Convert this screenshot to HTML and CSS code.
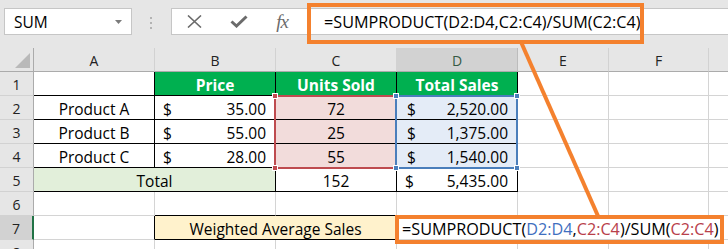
FILE: index.html
```html
<!DOCTYPE html>
<html lang="en">

<head>
    <meta charset="UTF-8">
    <meta name="viewport" content="width=device-width, initial-scale=1.0">
    <title>Weighted Average Sales</title>
    <link rel="stylesheet" href="styles.css">
</head>

<body>
    <div class="toolbar">
        <div class="namebox">
            <span>SUM</span>
            <svg class="caret" width="7" height="4" viewBox="0 0 7 4"><path d="M0 0 L7 0 L3.5 4 Z" fill="#7b7b7b" /></svg>
        </div>
        <div class="grip"><i></i><i></i><i></i></div>
        <div class="fbar">
            <span class="fbtn">
                <svg width="15" height="13" viewBox="0 0 15 13"><path d="M1 0.5 L14 12.5 M14 0.5 L1 12.5" stroke="#6b6b6b" stroke-width="1.6" fill="none" /></svg>
            </span>
            <span class="fbtn">
                <svg width="18" height="13" viewBox="0 0 18 13"><path d="M1.5 6.5 L6.5 11 L16.5 1.5" stroke="#6b6b6b" stroke-width="3" fill="none" /></svg>
            </span>
            <span class="fbtn fx">fx</span>
            <span class="ftext">=SUMPRODUCT(D2:D4,C2:C4)/SUM(C2:C4)</span>
        </div>
    </div>

    <div class="sheet">
        <!-- column headers -->
        <div class="corner"><i></i></div>
        <div class="ch">A</div>
        <div class="ch">B</div>
        <div class="ch">C</div>
        <div class="ch ch-on">D</div>
        <div class="ch">E</div>
        <div class="ch">F</div>
        <div class="ch"></div>

        <!-- row 1 -->
        <div class="rh">1</div>
        <div class="c edge-r edge-b"></div>
        <div class="c hd">Price</div>
        <div class="c hd">Units Sold</div>
        <div class="c hd">Total Sales</div>
        <div class="c"></div>
        <div class="c"></div>
        <div class="c"></div>

        <!-- row 2 -->
        <div class="rh">2</div>
        <div class="c mid edge-r edge-b">Product A</div>
        <div class="c money edge-r edge-b"><span>$</span><span>35.00</span></div>
        <div class="c mid units edge-r edge-b">72</div>
        <div class="c money total edge-r edge-b"><span>$</span><span>2,520.00</span></div>
        <div class="c"></div>
        <div class="c"></div>
        <div class="c"></div>

        <!-- row 3 -->
        <div class="rh">3</div>
        <div class="c mid edge-r edge-b">Product B</div>
        <div class="c money edge-r edge-b"><span>$</span><span>55.00</span></div>
        <div class="c mid units edge-r edge-b">25</div>
        <div class="c money total edge-r edge-b"><span>$</span><span>1,375.00</span></div>
        <div class="c"></div>
        <div class="c"></div>
        <div class="c"></div>

        <!-- row 4 -->
        <div class="rh">4</div>
        <div class="c mid edge-r edge-b">Product C</div>
        <div class="c money edge-r edge-b"><span>$</span><span>28.00</span></div>
        <div class="c mid units edge-r edge-b">55</div>
        <div class="c money total edge-r edge-b"><span>$</span><span>1,540.00</span></div>
        <div class="c"></div>
        <div class="c"></div>
        <div class="c"></div>

        <!-- row 5 -->
        <div class="rh">5</div>
        <div class="c mid sum span2 edge-r edge-b">Total</div>
        <div class="c mid edge-r edge-b">152</div>
        <div class="c money edge-r edge-b"><span>$</span><span>5,435.00</span></div>
        <div class="c"></div>
        <div class="c"></div>
        <div class="c"></div>

        <!-- row 6 -->
        <div class="rh">6</div>
        <div class="c"></div>
        <div class="c edge-b"></div>
        <div class="c edge-b"></div>
        <div class="c"></div>
        <div class="c"></div>
        <div class="c"></div>
        <div class="c"></div>

        <!-- row 7 -->
        <div class="rh rh-on">7</div>
        <div class="c edge-r"></div>
        <div class="c mid wavg span2 edge-r edge-b">Weighted Average Sales</div>
        <div class="c formula span4">=SUMPRODUCT(<b class="ref-d">D2:D4</b>,<b class="ref-c">C2:C4</b>)/SUM(<b class="ref-c">C2:C4</b>)<i class="cursor"></i></div>

        <!-- row 8 -->
        <div class="rh">8</div>
        <div class="c"></div>
        <div class="c"></div>
        <div class="c"></div>
        <div class="c"></div>
        <div class="c"></div>
        <div class="c"></div>
        <div class="c"></div>

        <!-- range highlights -->
        <div class="sel sel-c"><i class="h tl"></i><i class="h tr"></i><i class="h bl"></i><i class="h br"></i></div>
        <div class="sel sel-d"><i class="h tl"></i><i class="h tr"></i><i class="h bl"></i><i class="h br"></i></div>
    </div>

    <!-- callout -->
    <div class="callout callout-bar"></div>
    <div class="callout callout-cell"></div>
    <svg class="leader" width="728" height="249" viewBox="0 0 728 249"><line x1="521" y1="42" x2="598" y2="216" stroke="#f4812e" stroke-width="4" /></svg>
</body>

</html>
```

FILE: styles.css
```css
* {
    margin: 0;
    padding: 0;
    box-sizing: border-box;
}

body {
    position: relative;
    width: 728px;
    height: 249px;
    overflow: hidden;
    background: #fff;
    font-family: "Open Sans", "Liberation Sans", sans-serif;
    font-size: 15.5px;
    color: #000;
}

/* formula toolbar */

.toolbar {
    display: flex;
    align-items: flex-start;
    height: 48px;
    padding: 8px 0 0 4px;
    background: #e6e6e6;
}

.namebox {
    display: flex;
    align-items: center;
    justify-content: space-between;
    width: 128px;
    height: 27px;
    padding: 0 9px 0 9px;
    background: #fff;
    border: 1px solid #c6c6c6;
}

.namebox .caret {
    margin-top: 1px;
}

.grip {
    display: flex;
    flex-direction: column;
    gap: 3px;
    margin: 9px 0 0 18px;
}

.grip i {
    display: block;
    width: 2px;
    height: 2px;
    background: #b3b3b3;
}

.fbar {
    display: flex;
    align-items: center;
    flex: 1;
    height: 27px;
    margin-left: 19px;
    background: #fff;
    border: 1px solid #c6c6c6;
    border-right: 0;
}

.fbtn {
    display: flex;
    align-items: center;
    justify-content: center;
    width: 44px;
    height: 100%;
}

.fbtn + .fbtn {
    width: 46px;
}

.fbtn.fx {
    width: 40px;
    font-family: "Liberation Serif", serif;
    font-style: italic;
    font-size: 19px;
    color: #6b6b6b;
    letter-spacing: -1px;
}

.ftext {
    padding-left: 22px;
    white-space: nowrap;
    font-size: 16.2px;
}

/* sheet grid */

.sheet {
    position: relative;
    display: grid;
    grid-template-columns: 34px 121px 121px 121px 121px 91px 100px 100px;
    grid-auto-rows: 24px;
    height: 201px;
    overflow: hidden;
}

.corner {
    position: relative;
    background: #e6e6e6;
    border-right: 1px solid #ababab;
    border-bottom: 1px solid #ababab;
}

.corner i {
    position: absolute;
    left: 15px;
    top: 5px;
    width: 0;
    height: 0;
    border-left: 15px solid transparent;
    border-bottom: 15px solid #b9b9b9;
}

.ch {
    display: flex;
    align-items: center;
    justify-content: center;
    padding-top: 1px;
    background: #e6e6e6;
    border-right: 1px solid #d2d2d2;
    border-bottom: 1px solid #ababab;
    font-size: 14px;
    color: #222;
}

.ch-on {
    background: #d2d2d2;
    border-right-color: #bcbcbc;
    color: #355a44;
}

.rh {
    display: flex;
    align-items: center;
    justify-content: center;
    padding-top: 1px;
    background: #e6e6e6;
    border-right: 1px solid #ababab;
    border-bottom: 1px solid #d2d2d2;
    font-size: 14px;
    color: #222;
}

.rh-on {
    background: #d2d2d2;
    border-right: 2px solid #217346;
}

.c {
    display: flex;
    align-items: center;
    padding-top: 2px;
    border-right: 1px solid #d4d4d4;
    border-bottom: 1px solid #d4d4d4;
    white-space: nowrap;
}

.edge-r {
    border-right-color: #000;
}

.edge-b {
    border-bottom-color: #000;
}

.mid {
    justify-content: center;
}

.span2 {
    grid-column: span 2;
}

.span4 {
    grid-column: span 4;
}

.hd {
    justify-content: center;
    background: #00b050;
    color: #fff;
    font-weight: bold;
    border-right-color: #000;
    border-bottom-color: #000;
}

.money {
    justify-content: space-between;
    padding-left: 8px;
    padding-right: 9px;
}

.units {
    background: #f2dcdb;
}

.total {
    background: #e4ecf7;
    padding-left: 10px;
}

.sum {
    background: #e2efda;
}

.wavg {
    background: #fff2cc;
}

.formula {
    padding-left: 5px;
    border-right: 0;
    overflow: visible;
    font-size: 16.2px;
}

.formula b {
    font-weight: normal;
}

.ref-d {
    color: #3f6fc0;
}

.ref-c {
    color: #b8404a;
}

.cursor {
    display: inline-block;
    width: 1px;
    height: 18px;
    margin-left: 1px;
    background: #000;
}

/* range highlights drawn over the cells */

.sel {
    position: absolute;
    top: 47px;
    height: 74px;
    width: 123px;
    border: 2px solid;
}

.sel-c {
    left: 274px;
    border-color: #be4b4f;
    color: #be4b4f;
}

.sel-d {
    left: 395px;
    border-color: #4a7ebb;
    color: #4a7ebb;
}

.sel .h {
    position: absolute;
    width: 6px;
    height: 6px;
    background: currentColor;
    border: 1px solid #fff;
}

.sel .tl {
    left: -4px;
    top: -4px;
}

.sel .tr {
    right: -4px;
    top: -4px;
}

.sel .bl {
    left: -4px;
    bottom: -4px;
}

.sel .br {
    right: -4px;
    bottom: -4px;
}

/* orange callout */

.callout {
    position: absolute;
    border: 4px solid #f4812e;
}

.callout-bar {
    left: 307px;
    top: 3px;
    width: 337px;
    height: 41px;
}

.callout-cell {
    left: 395px;
    top: 215px;
    width: 329px;
    height: 29px;
}

.leader {
    position: absolute;
    left: 0;
    top: 0;
    pointer-events: none;
}
```
